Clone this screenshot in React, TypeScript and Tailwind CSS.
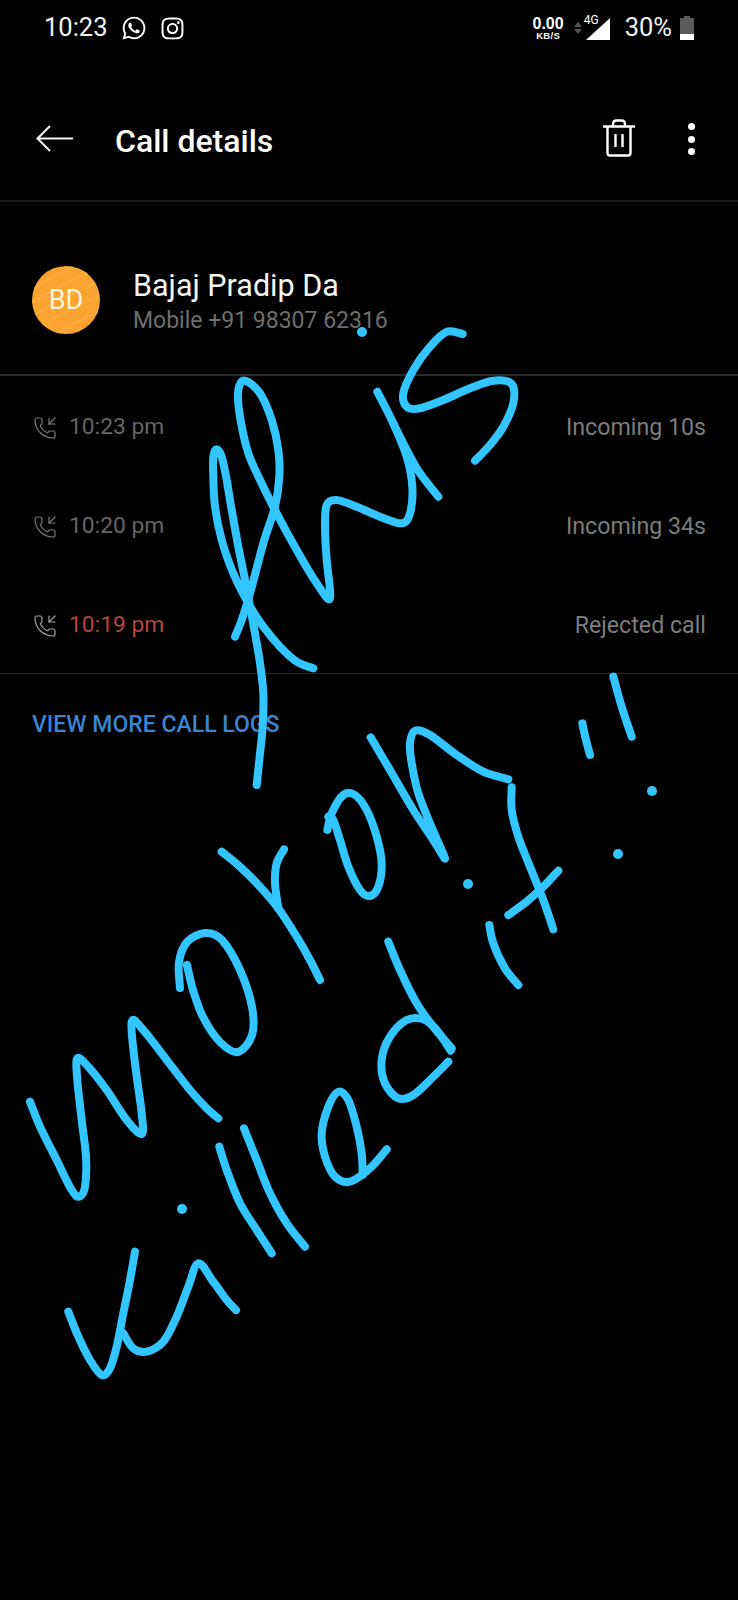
import React from "react";
import { FaWhatsapp, FaInstagram } from "react-icons/fa";
import { PhoneIncoming } from "lucide-react";

type P = [number, number];

function smooth(pts: P[]): string {
  let d = `M${pts[0][0]} ${pts[0][1]}`;
  for (let i = 0; i < pts.length - 1; i++) {
    const p0 = pts[Math.max(i - 1, 0)];
    const p1 = pts[i];
    const p2 = pts[i + 1];
    const p3 = pts[Math.min(i + 2, pts.length - 1)];
    const c1x = p1[0] + (p2[0] - p0[0]) / 6;
    const c1y = p1[1] + (p2[1] - p0[1]) / 6;
    const c2x = p2[0] - (p3[0] - p1[0]) / 6;
    const c2y = p2[1] - (p3[1] - p1[1]) / 6;
    d += ` C${c1x.toFixed(1)} ${c1y.toFixed(1)} ${c2x.toFixed(1)} ${c2y.toFixed(1)} ${p2[0].toFixed(1)} ${p2[1].toFixed(1)}`;
  }
  return d;
}

const map = (ox: number, oy: number, pts: P[]): P[] => pts.map(([x, y]) => [x / 3 + ox, y / 3 + oy]);
const a = (pts: P[]) => map(180, 310, pts);
const b = (pts: P[]) => map(200, 660, pts);
const c = (pts: P[]) => map(0, 980, pts);

const strokes: P[][] = [
  a([[400,1075],[350,1055],[300,1010],[250,950],[205,880],[160,790],[125,690],[105,590],[100,500],[100,440],[110,418],[125,440],[140,510],[155,600],[175,710],[195,810],[210,890],[225,970],[240,1060],[250,1150],[248,1250],[238,1350],[230,1425]]),
  a([[165,980],[185,930],[210,850],[250,700],[285,590],[298,500],[295,420],[275,330],[240,250],[195,212],[175,240],[180,320],[205,430],[250,530],[290,610],[350,720],[410,820],[450,865],[440,750],[435,650],[440,585],[470,570],[530,590],[600,620],[665,640],[690,610],[697,530],[680,440],[640,340],[592,245]]),
  a([[775,560],[720,490],[680,420],[640,340]]),
  a([[848,72],[800,65],[750,110],[700,180],[670,250],[680,290],[720,295],[790,270],[870,235],[940,212],[995,222],[1000,280],[970,350],[930,405],[885,452]]),
  b([[65,575],[120,620],[180,680],[235,745],[290,830],[330,900],[360,960]]),
  b([[252,568],[230,610],[225,670],[235,745]]),
  b([[382,510],[395,460],[430,405],[465,405],[500,450],[530,530],[545,610],[535,680],[510,708],[480,690],[445,620],[420,540],[400,480],[385,470]]),
  b([[512,232],[570,330],[640,450],[700,540],[735,595],[690,490],[655,400],[635,310],[630,250],[645,212],[690,225],[770,285],[850,335],[925,358]]),
  b([[935,382],[935,450],[955,530],[990,620],[1030,720],[1060,808]]),
  b([[1075,632],[1030,680],[980,725],[925,765]]),
  b([[868,795],[880,850],[915,925],[955,975]]),
  b([[1240,50],[1265,140],[1295,230]]),
  b([[1147,190],[1158,240],[1170,285]]),
  b([[565,845],[600,930],[650,1030],[700,1100],[755,1165]]),
  c([[1352,212],[1310,150],[1270,118],[1220,120],[1170,170],[1145,240],[1155,310],[1195,355],[1240,345],[1300,290],[1345,245]]),
  c([[1160,508],[1110,565],[1050,605],[1005,590],[975,530],[965,460],[985,380],[1015,335],[1045,360],[1070,440],[1085,520],[1088,585]]),
  c([[658,500],[680,570],[720,670],[770,750],[815,820]]),
  c([[732,445],[770,540],[810,640],[860,730],[915,800]]),
  c([[90,365],[120,440],[170,540],[215,630],[238,650],[255,620],[258,530],[245,420],[232,300],[232,235],[265,260],[320,330],[380,420],[425,462],[425,400],[405,250],[395,125],[430,150],[500,240],[570,330],[620,385],[655,415]]),
  [[180,988],[179,962],[187,942],[205,933],[222,940],[240,970],[252,1007],[252,1035],[238,1052],[220,1042],[203,1017],[193,990],[187,965]],
  c([[405,815],[390,900],[370,1000],[350,1100],[330,1165],[305,1185],[270,1140],[235,1070],[205,995]]),
  c([[370,1060],[400,1105],[440,1115],[490,1085],[530,1010],[565,920],[595,850],[640,905],[680,960],[708,990]]),
];

const dots: P[] = [[362,332],[652,791],[618,854],[468,884],[182,1209]];

function Row({ time, label, missed }: { time: string; label: string; missed?: boolean }) {
  return (
    <div className="flex h-[99px] items-center justify-between pl-[33px] pr-[32px] pt-[4px]">
      <div className="flex items-center gap-[12px]">
        <PhoneIncoming size={24} strokeWidth={1.2} className={missed ? "text-[#a0a0a0]" : "text-[#7a7a7a]"} />
        <span className={`text-[22.8px] ${missed ? "text-[#b8453a]" : "text-[#666666]"}`}>{time}</span>
      </div>
      <span className="text-[23.2px] text-[#7c7c7c]">{label}</span>
    </div>
  );
}

export default function App() {
  return (
    <div className="relative h-[1600px] w-[738px] overflow-hidden bg-black font-['Roboto',sans-serif] text-white">
      {/* status bar */}
      <div className="flex h-[56px] items-center justify-between pl-[44px] pr-[44px]">
        <div className="flex items-center gap-[13px]">
          <span className="text-[25.5px] leading-none text-[#f2f2f2]">10:23</span>
          <FaWhatsapp size={26} />
          <FaInstagram size={25} />
        </div>
        <div className="flex items-center">
          <div className="flex flex-col items-center font-['Liberation_Sans',sans-serif] font-bold">
            <span className="text-[16px] leading-[15px]">0.00</span>
            <span className="text-[9.5px] leading-[10px] tracking-[0.3px]">KB/S</span>
          </div>
          <svg width="10" height="14" viewBox="0 0 10 14" className="ml-[9px]">
            <path d="M5 1 L9 6 H1 Z M1 8 H9 L5 13 Z" fill="#555555" />
          </svg>
          <div className="relative h-[26px] w-[28px]">
            <svg width="28" height="26" viewBox="0 0 28 26">
              <path d="M27 3 V25 H3 Z" fill="#ffffff" />
            </svg>
            <span className="absolute left-[1px] top-[-1px] text-[12px] leading-[12px]">4G</span>
          </div>
          <span className="ml-[14px] text-[25.5px] leading-none text-[#f0f0f0]">30%</span>
          <svg width="14" height="24" viewBox="0 0 14 24" className="ml-[8px]">
            <path d="M4 0 H10 V2 H14 V24 H0 V2 H4 Z" fill="#5a5a5a" />
            <rect x="0" y="18" width="14" height="6" fill="#ffffff" />
          </svg>
        </div>
      </div>

      {/* toolbar */}
      <div className="flex h-[146px] items-center justify-between border-b-2 border-[#1b1b1b] pl-[36px] pr-[43px] pt-[22px]">
        <div className="flex items-center">
          <svg width="38" height="28" viewBox="0 0 38 28" fill="none" stroke="#f5f5f5" strokeWidth="2">
            <path d="M37 13.5 H2 M14 1 L1.5 13.5 L14 26" />
          </svg>
          <span className="ml-[41px] mt-[3px] text-[32px] font-medium leading-none">Call details</span>
        </div>
        <div className="flex items-center gap-[52px]">
          <svg width="34" height="38" viewBox="0 0 34 38" fill="none" stroke="#ffffff" strokeWidth="2.4" className="mt-[-2px]">
            <path d="M1 7.5 H33 M11 7 V5 C11 2.5 12.5 1.5 14.5 1.5 H19.5 C21.5 1.5 23 2.5 23 5 V7 M5.5 8 V34 C5.5 35.5 6.5 36.5 8 36.5 H26 C27.5 36.5 28.5 35.5 28.5 34 V8 M13.5 15 V28 M20.5 15 V28" />
          </svg>
          <div className="flex flex-col gap-[5.5px]">
            <span className="h-[7px] w-[7px] rounded-full bg-white" />
            <span className="h-[7px] w-[7px] rounded-full bg-white" />
            <span className="h-[7px] w-[7px] rounded-full bg-white" />
          </div>
        </div>
      </div>

      {/* contact */}
      <div className="flex h-[174px] items-center border-b-2 border-[#2a2a2a] pl-[32px] pt-[24px]">
        <div className="relative flex h-[68px] w-[68px] items-center justify-center overflow-hidden rounded-full bg-[#f9a431]">
          <svg width="68" height="68" viewBox="0 0 68 68" fill="none" stroke="#fbad42" strokeWidth="2" className="absolute inset-0">
            <path d="M-10 30 Q20 10 50 -5 M-8 42 Q25 20 62 4 M-5 54 Q30 30 72 14 M0 66 Q35 42 78 26 M10 76 Q45 54 80 40 M24 80 Q50 66 80 54" />
          </svg>
          <span className="relative text-[27px] leading-none text-[#fff3dc]">BD</span>
        </div>
        <div className="ml-[33px] flex flex-col pt-[6px]">
          <span className="text-[30.5px] leading-[36px] text-[#f5f5f5]">Bajaj Pradip Da</span>
          <span className="text-[23px] leading-[34px] text-[#6e6e6e]">Mobile +91 98307 62316</span>
        </div>
      </div>

      {/* call log */}
      <div className="flex flex-col border-b border-[#262626]">
        <Row time="10:23 pm" label="Incoming 10s" />
        <Row time="10:20 pm" label="Incoming 34s" />
        <Row time="10:19 pm" label="Rejected call" missed />
      </div>

      <div className="flex h-[99px] items-center pl-[32px] pt-[4px]">
        <span className="text-[23px] font-medium text-[#3a84d4]">VIEW MORE CALL LOGS</span>
      </div>

      {/* handwriting over the screen */}
      <svg width="738" height="1600" viewBox="0 0 738 1600" fill="none" stroke="#33c5ff" strokeWidth="8" strokeLinecap="round" strokeLinejoin="round" className="absolute left-0 top-0">
        {strokes.map((s, i) => (
          <path key={i} d={smooth(s)} />
        ))}
        {dots.map((d, i) => (
          <circle key={i} cx={d[0]} cy={d[1]} r="5" fill="#33c5ff" stroke="none" />
        ))}
      </svg>
    </div>
  );
}
